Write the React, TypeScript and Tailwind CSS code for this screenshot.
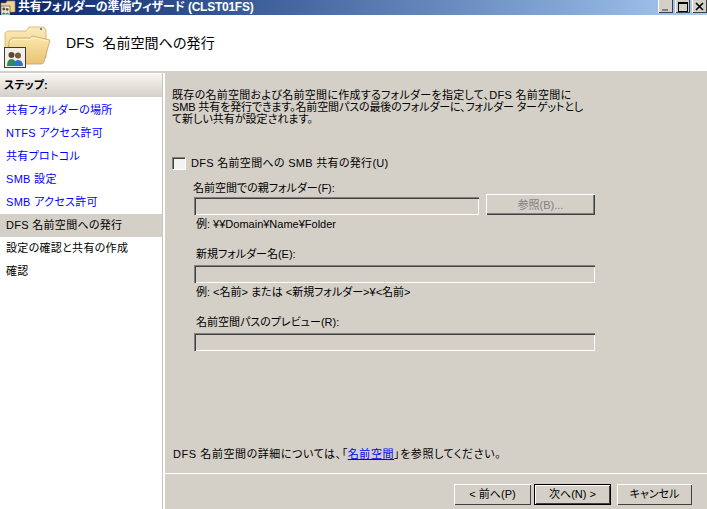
const steps = [
  { label: '共有フォルダーの場所', link: true },
  { label: 'NTFS アクセス許可', link: true },
  { label: '共有プロトコル', link: true },
  { label: 'SMB 設定', link: true },
  { label: 'SMB アクセス許可', link: true },
  { label: 'DFS 名前空間への発行', active: true },
  { label: '設定の確認と共有の作成' },
  { label: '確認' },
];

function FolderIcon() {
  return (
    <svg width="47" height="45" viewBox="4 24 47 45" className="mt-[9px] shrink-0 self-start">
      <defs>
        <linearGradient id="front" x1="0" y1="0" x2="0" y2="1">
          <stop offset="0" stopColor="#fbe7ad" />
          <stop offset="1" stopColor="#e9c272" />
        </linearGradient>
        <linearGradient id="back" x1="0" y1="0" x2="0" y2="1">
          <stop offset="0" stopColor="#fcebb8" />
          <stop offset="1" stopColor="#eccb84" />
        </linearGradient>
      </defs>
      <path d="M5 33 L8 31 H26 L29 27 H44 L46 30 V58 H5 Z" fill="url(#back)" stroke="#d2b06c" strokeWidth="0.8" />
      <rect x="40" y="28" width="2" height="2" fill="#4f86e0" />
      <path d="M9 41 L12 38 H30 L32 36 L50 40 L44 62 Q43.5 64 41 64 H12 L8 62 Z" fill="url(#front)" stroke="#c9a25a" strokeWidth="0.8" />
      <path d="M10 42 L13 39.5 H30 L33 37.5 L48 41" fill="none" stroke="#fff3cf" strokeWidth="1" />
      <rect x="4.5" y="47.5" width="21" height="20" fill="#f1efe8" stroke="#3c3c3c" />
      <circle cx="11.5" cy="55" r="3" fill="#5c4a30" />
      <path d="M7 66 Q7 59 11.5 59 Q16 59 16 66 Z" fill="#2f8a58" />
      <circle cx="18" cy="55.5" r="3" fill="#7a5a38" />
      <path d="M13.5 66 Q13.5 60 18 60 Q23 60 23 66 Z" fill="#2f74c4" />
    </svg>
  );
}

function TitleIcon() {
  return (
    <svg width="16" height="15" viewBox="0 0 16 15" className="shrink-0">
      <path d="M1 3 H6 L7 1 H15 V12 H1 Z" fill="#f0d48a" stroke="#a98a44" strokeWidth="0.6" />
      <rect x="1" y="6" width="9" height="9" fill="#ece9d8" stroke="#444" strokeWidth="0.6" />
      <circle cx="3.8" cy="9" r="1.4" fill="#5c4a30" />
      <path d="M2 14 Q3.8 10.5 5.5 14 Z" fill="#2f8a58" />
      <circle cx="7.2" cy="9.5" r="1.4" fill="#7a5a38" />
      <path d="M5.5 14 Q7.2 11 9 14 Z" fill="#2f74c4" />
    </svg>
  );
}

function WinButton({ kind }: { kind: 'min' | 'max' | 'close' }) {
  return (
    <div className="relative flex h-[13px] w-[15px] items-center justify-center bg-[#d4d0c8] shadow-[inset_1px_0_0_#fff,inset_-1px_-1px_0_#404040]">
      {kind === 'min' && <div className="absolute bottom-[2px] left-[4px] h-[2px] w-[6px] bg-[#808080]" />}
      {kind === 'max' && <div className="h-[10px] w-[10px] border border-t-2 border-black" />}
      {kind === 'close' && (
        <svg width="9" height="9" viewBox="0 0 9 9">
          <path d="M1 1 L8 8 M8 1 L1 8" stroke="#000" strokeWidth="1.6" />
        </svg>
      )}
    </div>
  );
}

function Field({ className }: { className: string }) {
  return (
    <div className={`h-[18px] bg-[#d4d0c8] shadow-[inset_1px_1px_0_#808080,inset_2px_2px_0_#404040,inset_-1px_-1px_0_#fff] ${className}`} />
  );
}

function NavButton({ label, primary, className }: { label: string; primary?: boolean; className: string }) {
  return (
    <button
      className={`h-[21px] text-black shadow-[inset_1px_1px_0_#fff,inset_-1px_-1px_0_#404040] ${primary ? 'border border-black' : ''} ${className}`}
    >
      {label}
    </button>
  );
}

export default function App() {
  return (
    <div className="flex h-[509px] w-[707px] flex-col overflow-hidden bg-[#d4d0c8] font-['Liberation_Sans','Noto_Sans_CJK_JP',sans-serif] text-[11px] text-black [font-feature-settings:'palt']">
      {/* title bar */}
      <div className="flex h-[15px] shrink-0 bg-gradient-to-r from-[#0a246a] to-[#a6caf0]">
        <TitleIcon />
        <span className="mt-[1px] ml-[2px] text-[12px] leading-[13px] font-bold tracking-[-0.25px] text-white">共有フォルダーの準備ウィザード (CLST01FS)</span>
        <div className="ml-auto flex">
          <WinButton kind="min" />
          <div className="ml-[2px]"><WinButton kind="max" /></div>
          <div className="ml-[2px]"><WinButton kind="close" /></div>
        </div>
      </div>

      {/* header */}
      <div className="flex h-[56px] shrink-0 items-center bg-white pl-[4px]">
        <FolderIcon />
        <h1 className="ml-[15px] text-[14px] leading-none tracking-[0.1px]">DFS&nbsp; 名前空間への発行</h1>
      </div>
      <div className="h-[2px] shrink-0 bg-[#d4d0c8]" />

      <div className="flex min-h-0 flex-1">
        {/* steps */}
        <aside className="flex w-[165px] shrink-0 flex-col border-r-2 border-white bg-white">
          <div className="w-[163px] flex-1 border-r border-[#c8c5bd]">
            <div className="flex h-[24px] items-center border-t border-white bg-gradient-to-b from-[#f7f6f3] to-[#d4d0c8] pl-[4px] font-bold">ステップ:</div>
            <ul className="mt-[2px] tracking-[0.3px]">
              {steps.map((s) => (
                <li
                  key={s.label}
                  className={`flex h-[23px] items-center pl-[6px] ${s.link ? 'text-[#0000ff]' : 'text-black'} ${s.active ? 'bg-[#d4d0c8]' : ''}`}
                >
                  {s.label}
                </li>
              ))}
            </ul>
          </div>
        </aside>

        {/* content */}
        <main className="flex min-w-0 flex-1 flex-col">
          <div className="flex-1 pt-[16px] pl-[7px]">
            <p className="leading-[12px] whitespace-nowrap">
              <span className="tracking-[0.28px]">既存の名前空間および名前空間に作成するフォルダーを指定して、DFS 名前空間に</span>
              <br />
              <span className="tracking-[-0.13px]">SMB 共有を発行できます。名前空間パスの最後のフォルダーに、フォルダー ターゲットとし</span>
              <br />
              て新しい共有が設定されます。
            </p>

            <label className="mt-[31px] flex h-[14px] items-center">
              <span className="h-[12px] w-[13px] bg-[#f4f3ef] shadow-[inset_1px_1px_0_#808080,inset_2px_2px_0_#404040,1px_1px_0_#fff]" />
              <span className="ml-[6px] tracking-[0.3px]">DFS 名前空間への SMB 共有の発行(U)</span>
            </label>

            <div className="mt-[11px] pl-[22px] leading-[14px]">
              <div className="-ml-px">名前空間での親フォルダー(F):</div>
              <div className="-mt-px flex h-[21px] items-end">
                <Field className="w-[285px]" />
                <button className="ml-[7px] h-[21px] w-[109px] text-[#808080] shadow-[inset_1px_1px_0_#fff,inset_-1px_-1px_0_#404040,inset_-2px_-2px_0_#808080]">
                  参照(B)...
                </button>
              </div>
              <div className="mt-[2px] ml-[2px]">例: ¥¥Domain¥Name¥Folder</div>

              <div className="mt-[16px] ml-[2px]">新規フォルダー名(E):</div>
              <Field className="mt-[4px] w-[401px]" />
              <div className="mt-[2px] ml-[2px]">例: &lt;名前&gt; または &lt;新規フォルダー&gt;¥&lt;名前&gt;</div>

              <div className="mt-[16px] ml-[2px]">名前空間パスのプレビュー(R):</div>
              <Field className="mt-[4px] w-[401px]" />
            </div>
          </div>

          <div className="pb-[11px] pl-[8px] tracking-[0.57px]">
            DFS 名前空間の詳細については、「<a className="text-[#0000ff] underline">名前空間</a>」を参照してください。
          </div>
          <div className="h-px bg-white" />
          <div className="flex h-[35px] items-start justify-end pt-[10px] pr-[15px]">
            <NavButton label="< 前へ(P)" className="w-[77px]" />
            <NavButton label="次へ(N) >" primary className="ml-[3px] w-[77px]" />
            <NavButton label="キャンセル" className="ml-[6px] w-[75px]" />
          </div>
        </main>
      </div>
    </div>
  );
}
